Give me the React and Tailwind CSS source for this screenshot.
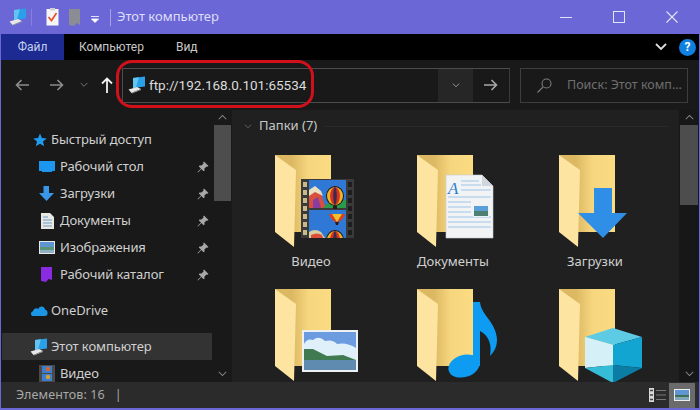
import React from 'react';

function PcIcon({ className }) {
  return (
    <svg className={className} viewBox="0 0 18 18">
      <path d="M5 2 L17 0.5 L17 10.5 L5 12 Z" fill="#29a0e8" />
      <path d="M5 2 L11 1.3 L8 11.6 L5 12 Z" fill="#62c4f2" />
      <path d="M0.5 13.5 L9 11 L13 13 L3.5 17 Z" fill="#e8e8e8" />
      <path d="M3.5 17 L13 13 L13 14 L4 17.6 Z" fill="#9a9a9a" />
    </svg>
  );
}

function Pin() {
  return (
    <svg className="w-3 h-3" viewBox="0 0 12 12">
      <path d="M7 0.5 L11.5 5 L10.4 5.8 L9.6 5.4 L7.4 7.6 L7.6 9.6 L6.6 10.2 L4.4 8 L1 11.5 L0.5 11 L4 7.6 L1.8 5.4 L2.4 4.4 L4.4 4.6 L6.6 2.4 L6.2 1.6 Z" fill="#a8a8a8" />
    </svg>
  );
}

function Chevron({ className, up, color = '#8a8a8a', sw = 1.4 }) {
  return (
    <svg className={className} viewBox="0 0 12 8" fill="none" stroke={color} strokeWidth={sw}>
      <path d={up ? 'M1 7 L6 2 L11 7' : 'M1 1 L6 6 L11 1'} />
    </svg>
  );
}

function Arrow({ className, color, flip }) {
  return (
    <svg className={className} viewBox="0 0 14 12" fill="none" stroke={color} strokeWidth={1.6}>
      <path d={flip ? 'M14 6 L1.5 6 M6.5 1 L1.5 6 L6.5 11' : 'M0 6 L12.5 6 M7.5 1 L12.5 6 L7.5 11'} />
    </svg>
  );
}

function TreeRow({ icon, label, indent, pin, selected }) {
  return (
    <div className={`flex items-center h-[27px] pr-[3px] ${indent ? 'pl-[37px]' : 'pl-[28px]'} ${selected ? 'bg-[#333333]' : ''}`}>
      <div className="flex items-center shrink-0 w-[21px]">{icon}</div>
      <span className="flex-1 text-[13px] tracking-[-0.1px] whitespace-nowrap text-[#d0d0d0]">{label}</span>
      {pin && <Pin />}
    </div>
  );
}

function FolderBase({ id, children }) {
  return (
    <svg className="w-[96px] h-[100px] block" viewBox="0 0 96 100">
      <defs>
        <linearGradient id={id} x1="0" x2="1" y1="0" y2="0">
          <stop offset="0.3" stopColor="#dcb862" />
          <stop offset="0.6" stopColor="#f6d67e" />
          <stop offset="1" stopColor="#fbdc82" />
        </linearGradient>
      </defs>
      <path d="M12 5 L68 5 L68 82 L31 82 Z" fill={`url(#${id})`} />
      <path d="M12 5 L33 20 L31 97 L12 82 Z" fill="#fde4a0" />
      {children}
    </svg>
  );
}

function Balloon({ cx, cy, rx, ry }) {
  return (
    <g>
      <ellipse cx={cx} cy={cy} rx={rx} ry={ry} fill="#1f1a1a" />
      <ellipse cx={cx} cy={cy} rx={rx - 1} ry={ry - 1} fill="#e8b428" />
      <ellipse cx={cx} cy={cy} rx={rx * 0.55} ry={ry - 1} fill="#d8321f" />
      <ellipse cx={cx} cy={cy} rx={rx * 0.2} ry={ry - 1} fill="#3c2a50" />
    </g>
  );
}

function VideoOverlay() {
  const holes = [0, 1, 2, 3, 4, 5, 6];
  return (
    <g>
      <rect x="38" y="29" width="53" height="59" fill="#3a3a3a" />
      {holes.map((i) => (
        <React.Fragment key={i}>
          <rect x="40" y={32 + i * 8} width="4" height="5" fill="#c9b98a" />
          <rect x="85" y={32 + i * 8} width="4" height="5" fill="#1d1d1d" />
        </React.Fragment>
      ))}
      <rect x="46" y="30" width="37" height="28" fill="#2f78d6" />
      <rect x="46" y="60" width="37" height="28" fill="#2f78d6" />
      <path d="M46 42 L52 38 L58 43 L61 53 L64 58 L46 58 Z" fill="#d8503c" />
      <path d="M46 40 L52 36 L58 41 L60 46 L52 42 L46 46 Z" fill="#e8e0c0" />
      <path d="M50 50 L55 47 L58 58 L50 58 Z" fill="#8a3ca0" />
      <path d="M60 58 L68 50 L83 50 L83 58 Z" fill="#2a9a4c" />
      <Balloon cx={72} cy={46} rx={9} ry={10} />
      <rect x="70" y="56" width="4" height="3" fill="#2a1a1a" />
      <path d="M66 64 L82 64 Q80 71 74 72 Q68 71 66 64 Z" fill="#d8401f" />
      <path d="M69 64 L79 64 L74 72 Z" fill="#f0c02c" />
      <path d="M72 72 L76 72 L75 75 L73 75 Z" fill="#2a1a1a" />
      <path d="M46 82 Q52 78 58 82 L62 88 L46 88 Z" fill="#d8d0a0" />
      <path d="M48 85 Q54 82 59 85 L60 88 L48 88 Z" fill="#d8503c" />
      <Balloon cx={72} cy={90} rx={9} ry={10} />
      <rect x="38" y="88" width="53" height="3" fill="#202020" />
      <rect x="61" y="91" width="24" height="9" fill="#202020" />
    </g>
  );
}

function DocOverlay() {
  return (
    <g>
      <path d="M41 25 L77 25 L88 36 L88 88 L41 88 Z" fill="#f2f3f5" stroke="#c8ccd2" strokeWidth="0.6" />
      <path d="M77 25 L77 36 L88 36 Z" fill="#d0d6de" />
      <text x="43" y="44" fontFamily="Liberation Serif, serif" fontStyle="italic" fontSize="17" fill="#2f80d0">A</text>
      <path d="M56 31 L74 31 M56 35 L76 35 M56 40 L86 40 M43 47 L86 47 M43 52 L66 52 M43 57 L66 57 M43 62 L66 62 M43 67 L86 67 M43 72 L86 72 M43 77 L86 77" stroke="#9fc4e8" strokeWidth="1" />
      <rect x="68" y="55" width="16" height="12" fill="#eaf2f8" />
      <rect x="69" y="56" width="14" height="5" fill="#5c9fd8" />
      <rect x="69" y="61" width="14" height="5" fill="#4f7f70" />
    </g>
  );
}

function DownloadOverlay() {
  return <path d="M47 38 L65 38 L65 63 L80 63 L56 88 L31 63 L47 63 Z" fill="#2f8fe6" />;
}

function PictureOverlay() {
  return (
    <g>
      <rect x="39" y="46" width="56" height="42" fill="#eef1f4" />
      <rect x="41" y="48" width="52" height="38" fill="#6d9be0" />
      <path d="M41 60 Q44 54 50 56 Q56 51 62 57 Q70 55 74 60 Q84 58 93 64 L93 76 L41 76 Z" fill="#dff0fb" />
      <path d="M41 65 L50 65 L64 72 L80 71 L93 76 L93 77 L41 77 Z" fill="#3f7a50" />
      <rect x="41" y="76" width="52" height="10" fill="#5f8bb0" />
    </g>
  );
}

function MusicOverlay() {
  return (
    <g fill="#0d9cf2">
      <ellipse cx="59" cy="82" rx="16" ry="11" transform="rotate(-18 59 82)" />
      <path d="M68 18 L75 18 C76 31 91 38 92 55 C92 62 90 67 85 72 C87 60 84 52 75 47 L75 82 L68 82 Z" />
    </g>
  );
}

function CubeOverlay() {
  return (
    <g>
      <path d="M66 44 L95 53 L66 61 L38 53 Z" fill="#5dcbe4" />
      <path d="M38 53 L66 61 L66 81 L38 84 Z" fill="#d5f0f6" />
      <path d="M66 61 L95 53 L95 84 L66 81 Z" fill="#12a5d2" />
      <path d="M38 84 L66 81 L66 99 Z" fill="#35bcd6" />
      <path d="M66 81 L95 84 L66 99 Z" fill="#0b7ca4" />
    </g>
  );
}

const folders = [
  { id: 'f1', label: 'Видео', overlay: <VideoOverlay /> },
  { id: 'f2', label: 'Документы', overlay: <DocOverlay /> },
  { id: 'f3', label: 'Загрузки', overlay: <DownloadOverlay /> },
  { id: 'f4', overlay: <PictureOverlay /> },
  { id: 'f5', overlay: <MusicOverlay /> },
  { id: 'f6', overlay: <CubeOverlay /> },
];

function FolderTile({ folder }) {
  return (
    <div className="flex flex-col items-center h-[134px]">
      <FolderBase id={folder.id}>{folder.overlay}</FolderBase>
      {folder.label && <span className="text-[13px] text-[#d0d0d0] mt-[2px]">{folder.label}</span>}
    </div>
  );
}

export default function App() {
  return (
    <div className="relative w-[700px] h-[410px] overflow-hidden flex flex-col border-x border-b-2 border-[#6b67d6] bg-[#191919] font-['Noto_Sans',sans-serif]">
      {/* Title bar */}
      <div className="flex items-center h-[34px] shrink-0 bg-[#6b67d6]">
        <PcIcon className="w-[18px] h-[18px] ml-[8px]" />
        <div className="w-px h-[17px] bg-[#8481de] ml-[4px]" />
        <svg className="w-[13px] h-[18px] ml-[14px]" viewBox="0 0 13 18">
          <rect x="0.5" y="1" width="12" height="16.5" fill="#f6f6f6" />
          <rect x="4" y="0" width="5" height="2.5" fill="#cfcfcf" />
          <path d="M2.5 9 L5.5 12.5 L10.5 5" stroke="#e8512c" strokeWidth="1.7" fill="none" />
        </svg>
        <svg className="w-[11px] h-[17px] ml-[10px]" viewBox="0 0 11 17">
          <path d="M0 0 L11 0 L11 16 L7.5 14 L5 17 L0 16 Z" fill="#8c8c94" />
        </svg>
        <svg className="w-[8px] h-[7px] ml-[11px] mt-[4px]" viewBox="0 0 8 7">
          <path d="M0 0.5 L8 0.5 M0.5 3 L7.5 3 L4 6.5 Z" stroke="#ffffff" strokeWidth="0.8" fill="#ffffff" />
        </svg>
        <div className="w-px h-[17px] bg-[#a6a4e6] ml-[11px]" />
        <span className="ml-[6px] text-[13px] text-[#dedef6] whitespace-nowrap">Этот компьютер</span>
        <div className="flex-1" />
        <div className="w-[12px] h-px bg-[#e4e4f8] mr-[41px]" />
        <div className="w-[12px] h-[12px] border border-[#e4e4f8] mr-[41px]" />
        <svg className="w-[12px] h-[12px] mr-[21px]" viewBox="0 0 12 12" stroke="#e4e4f8" strokeWidth="1.1">
          <path d="M0.5 0.5 L11.5 11.5 M11.5 0.5 L0.5 11.5" />
        </svg>
      </div>

      {/* Ribbon tabs */}
      <div className="flex items-center h-[26px] shrink-0 bg-black text-[12px] font-['Roboto',sans-serif]">
        <div className="flex items-center justify-center w-[63px] h-full bg-[#1c2a92] text-[#c4d0f0]">Файл</div>
        <span className="ml-[15px] text-[#c8c8c8]">Компьютер</span>
        <span className="ml-[32px] text-[#c8c8c8]">Вид</span>
        <div className="flex-1" />
        <Chevron className="w-[12px] h-[8px] mr-[12px]" color="#dcdcdc" sw={1.8} />
        <div className="flex items-center justify-center w-[17px] h-[17px] mr-[3px] rounded-full bg-[#0f7fe0] text-[12px] font-bold text-white">?</div>
      </div>

      {/* Address bar */}
      <div className="flex items-center h-[50px] shrink-0 bg-[#191919]">
        <Arrow className="w-[14px] h-[12px] ml-[14px]" color="#8c8c8c" flip />
        <Arrow className="w-[14px] h-[12px] ml-[21px]" color="#8c8c8c" />
        <Chevron className="w-[8px] h-[6px] ml-[16px]" color="#7c7c7c" />
        <svg className="w-[12px] h-[16px] ml-[13px]" viewBox="0 0 12 16" fill="none" stroke="#f2f2f2" strokeWidth="1.8">
          <path d="M6 16 L6 1.5 M1 6.5 L6 1.5 L11 6.5" />
        </svg>
        <div className="flex items-center w-[388px] h-[35px] ml-[9px] border border-[#4c4c4c] border-r-[#3a3a3a]">
          <PcIcon className="w-[18px] h-[18px] ml-[5px]" />
          <span className="ml-[3px] text-[13.5px] text-[#dcdcdc] whitespace-nowrap font-['Roboto',sans-serif]">ftp://192.168.0.101:65534</span>
          <div className="flex-1" />
          <div className="flex items-center justify-center w-[35px] h-full bg-[#262626]">
            <Chevron className="w-[8px] h-[5px]" color="#a8a8a8" />
          </div>
          <div className="flex items-center justify-center w-[36px] h-full">
            <Arrow className="w-[14px] h-[12px]" color="#a8a8a8" />
          </div>
        </div>
        <div className="flex items-center w-[168px] h-[35px] ml-[10px] border border-[#3e3e3e]">
          <svg className="w-[15px] h-[15px] ml-[16px]" viewBox="0 0 15 15" fill="none" stroke="#7c7c7c" strokeWidth="1.1">
            <circle cx="9.5" cy="5.5" r="4.5" />
            <path d="M6 9 L0.5 14.5" />
          </svg>
          <span className="ml-[15px] text-[12.5px] text-[#6f6f6f] whitespace-nowrap">Поиск: Этот комп...</span>
        </div>
      </div>

      {/* Body */}
      <div className="flex flex-1 min-h-0">
        {/* Navigation pane */}
        <div className="flex w-[231px] shrink-0 bg-[#191919]">
          <div className="flex-1 min-w-0 pt-[16px] pl-[1px]">
            <TreeRow
              label="Быстрый доступ"
              icon={
                <svg className="w-[14px] h-[14px] ml-[3px]" viewBox="0 0 14 14">
                  <path d="M7 0.5 L8.9 5 L13.7 5.4 L10 8.5 L11.2 13.3 L7 10.7 L2.8 13.3 L4 8.5 L0.3 5.4 L5.1 5 Z" fill="#1f9cf0" />
                </svg>
              }
            />
            <TreeRow
              indent
              pin
              label="Рабочий стол"
              icon={
                <svg className="w-[16px] h-[12px]" viewBox="0 0 16 12">
                  <path d="M0 0 L16 0 L16 10 L13 10 L13 11 L3 11 L3 10 L0 10 Z" fill="#1c96ee" />
                </svg>
              }
            />
            <TreeRow
              indent
              pin
              label="Загрузки"
              icon={
                <svg className="w-[15px] h-[15px]" viewBox="0 0 15 15">
                  <path d="M4.5 0 L10 0 L10 7 L15 7 L7.5 15 L0 7 L4.5 7 Z" fill="#3a96e8" />
                </svg>
              }
            />
            <TreeRow
              indent
              pin
              label="Документы"
              icon={
                <svg className="w-[13px] h-[16px] ml-[2px]" viewBox="0 0 13 16">
                  <path d="M0 0 L9 0 L13 4 L13 16 L0 16 Z" fill="#e8e8e2" />
                  <path d="M2 4 L7 4 M2 7 L11 7 M2 10 L11 10 M2 13 L11 13" stroke="#6a9cc8" strokeWidth="1" />
                </svg>
              }
            />
            <TreeRow
              indent
              pin
              label="Изображения"
              icon={
                <svg className="w-[16px] h-[13px]" viewBox="0 0 16 13">
                  <rect width="16" height="13" fill="#e8e8e8" />
                  <rect x="1" y="1" width="14" height="5" fill="#5f95d0" />
                  <rect x="1" y="6" width="14" height="3" fill="#5c9478" />
                  <rect x="1" y="9" width="14" height="3" fill="#8fb0c4" />
                </svg>
              }
            />
            <TreeRow
              indent
              pin
              label="Рабочий каталог"
              icon={
                <svg className="w-[11px] h-[15px] ml-[2px]" viewBox="0 0 11 15">
                  <path d="M0 0 L11 0 L11 13 L7.5 12 L5 15 L0 14 Z" fill="#8a2be2" />
                </svg>
              }
            />
            <div className="mt-[9px]">
              <TreeRow
                label="OneDrive"
                icon={
                  <svg className="w-[18px] h-[11px]" viewBox="0 0 18 11">
                    <path d="M3.5 11 C0.5 11 0 7 3 6.2 C3.6 3 7 2.6 8.4 4 C9.6 0.6 14.4 0.8 15 4.6 C18.4 5 18.6 11 14.6 11 Z" fill="#1b96e6" />
                  </svg>
                }
              />
            </div>
            <div className="mt-[9px]">
              <TreeRow selected label="Этот компьютер" icon={<PcIcon className="w-[18px] h-[18px]" />} />
            </div>
            <TreeRow
              indent
              label="Видео"
              icon={
                <svg className="w-[16px] h-[17px]" viewBox="0 0 16 17">
                  <rect width="16" height="17" fill="#4a4a4a" />
                  <rect x="3" y="1" width="10" height="7" fill="#3c7fd0" />
                  <rect x="3" y="9" width="10" height="7" fill="#3c7fd0" />
                  <circle cx="9" cy="4" r="2.2" fill="#d8642c" />
                  <circle cx="9" cy="12" r="2.2" fill="#d8a02c" />
                </svg>
              }
            />
          </div>
          <div className="flex flex-col items-center w-[20px] shrink-0">
            <Chevron className="w-[9px] h-[6px] mt-[4px]" up />
            <div className="w-[17px] h-[76px] mt-[5px] bg-[#4d4d4d]" />
            <div className="flex-1" />
            <Chevron className="w-[9px] h-[6px] mb-[5px]" />
          </div>
        </div>

        {/* Content */}
        <div className="flex flex-1 min-w-0 bg-[#202020]">
          <div className="flex-1 min-w-0 overflow-hidden">
            <div className="flex items-center h-[32px] pl-[12px] pr-[10px]">
              <Chevron className="w-[8px] h-[5px]" color="#6c6c6c" />
              <span className="ml-[7px] text-[13px] text-[#c8c8c8] whitespace-nowrap">Папки (7)</span>
              <div className="flex-1 h-px ml-[8px] bg-[#2a2a2a]" />
            </div>
            <div className="grid grid-cols-[142px_142px_142px] pl-[8px] pt-[8px]">
              {folders.map((f) => (
                <FolderTile key={f.id} folder={f} />
              ))}
            </div>
          </div>
          <div className="flex flex-col items-center w-[20px] shrink-0 bg-[#171717]">
            <Chevron className="w-[9px] h-[6px] mt-[4px]" up />
            <div className="w-[18px] h-[80px] mt-[5px] bg-[#4d4d4d]" />
            <div className="flex-1" />
            <Chevron className="w-[9px] h-[6px] mb-[5px]" />
          </div>
        </div>
      </div>

      {/* Status bar */}
      <div className="flex items-center h-[26px] shrink-0 bg-[#2b2b2b]">
        <span className="ml-[15px] text-[12.5px] text-[#a8a8a8] whitespace-nowrap tracking-[0.1px]">Элементов: 16</span>
        <span className="ml-[10px] text-[12.5px] text-[#a8a8a8]">|</span>
        <div className="flex-1" />
        <svg className="w-[17px] h-[14px]" viewBox="0 0 17 14">
          <rect x="0" y="0" width="5" height="14" fill="#d8d8d8" />
          <path d="M1 2.5 L4 2.5 M1 7 L4 7 M1 11.5 L4 11.5" stroke="#444" strokeWidth="1.4" />
          <path d="M7 2.5 L17 2.5 M7 7 L17 7 M7 11.5 L17 11.5" stroke="#777" strokeWidth="1" />
        </svg>
        <div className="flex items-center justify-center w-[26px] h-[25px] ml-[3px] mr-[4px] bg-[#6b6b6b]">
          <svg className="w-[16px] h-[12px]" viewBox="0 0 16 12">
            <rect width="16" height="12" fill="#eeeeee" />
            <rect x="1" y="1" width="14" height="5" fill="#5f95d0" />
            <rect x="1" y="6" width="14" height="2.5" fill="#3d6e58" />
            <rect x="1" y="8.5" width="14" height="2.5" fill="#7fa6bc" />
          </svg>
        </div>
      </div>

      {/* Red marker drawn over the address field */}
      <div className="absolute left-[115px] top-[60px] w-[198px] h-[48px] rounded-[16px] border-[3px] border-[#d2101c]" />
    </div>
  );
}
